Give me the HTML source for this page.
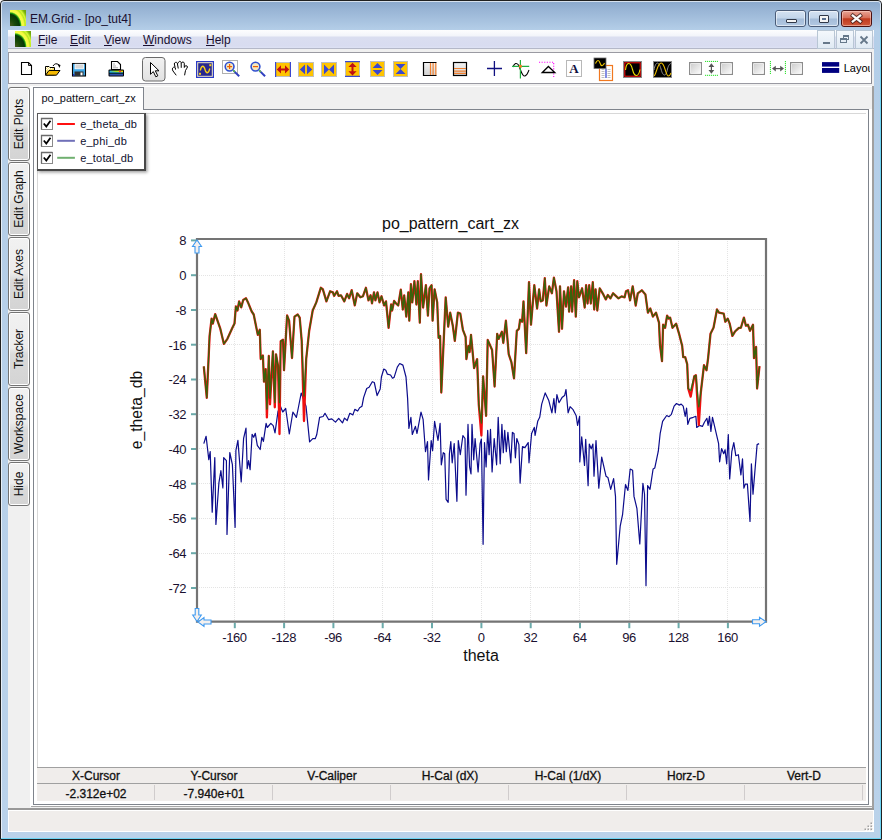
<!DOCTYPE html>
<html><head><meta charset="utf-8">
<style>
*{margin:0;padding:0;box-sizing:border-box}
html,body{width:882px;height:840px;overflow:hidden;background:#fff;font-family:"Liberation Sans",sans-serif}
.a{position:absolute}
#win{left:0;top:0;width:882px;height:840px;background:linear-gradient(#8aa8cc 0px,#9ab6d6 10px,#b4cee8 29px,#bad2ea 100%);border:1px solid #202020;border-radius:4px 4px 0 0}
#winhl{left:0;top:0;right:0;bottom:0;border:1px solid rgba(255,255,255,.65);border-radius:3px 3px 0 0}
.title{left:30px;top:11.5px;font-size:12px;color:#1a1030;white-space:nowrap}
.cb{top:10px;height:17px;border:1px solid #4a5c78;border-radius:3px;background:linear-gradient(#d4e2f2 0,#c2d5ea 48%,#a4bcd8 52%,#b2c8e2 100%)}
.cbin{position:absolute;left:0;top:0;right:0;bottom:0;border:1px solid rgba(255,255,255,.55);border-radius:2px}
.menu{left:8px;top:30px;width:866px;height:19px;background:linear-gradient(#fdfdfe 0,#f2f4fa 6px,#dadef0 7px,#d8dcf0 16px,#dde2f4 18px,#b4b8c8 18px,#b4b8c8 19px)}
.mi{font-size:12px;color:#1a1030;white-space:nowrap}
.mdib{top:30px;height:19px;border:1px solid #b8c6d4;background:linear-gradient(#f4f8fc,#e0eaf4)}
#client{left:8px;top:49px;width:866px;height:783px;background:#f0f0f0}
#tb{left:8px;top:52px;width:864px;height:32px;background:#fff;border:1px solid #9a9aa2;border-right-color:#8a8a92}
.stab{left:8px;width:22px;border:1px solid #747474;border-radius:3px;box-shadow:inset 0 0 0 1px #fff;background:linear-gradient(#f1f1f1 0,#ececec 48%,#dadada 58%,#d4d4d4 100%)}
.stab span{position:absolute;left:50%;top:50%;transform:translate(-50%,-50%) rotate(-90deg);white-space:nowrap;font-size:12px;color:#101010}
#panel{left:33px;top:109px;width:836px;height:696px;background:#fff;border:1px solid #7f848c}
#tab{left:33px;top:87px;width:111px;height:23px;background:#fff;border:1px solid #7f848c;border-bottom:none}
#tab span{position:absolute;left:7.5px;top:3.5px;font-size:11px;color:#101020;white-space:nowrap}
.th{top:769px;height:15px;font-size:12px;-webkit-text-stroke:0.3px #101010;text-align:center;color:#101010;line-height:15px;white-space:nowrap}
.tv{top:786px;height:16px;font-size:12px;-webkit-text-stroke:0.3px #101010;text-align:center;color:#101010;line-height:16px;white-space:nowrap}
svg text{font-family:"Liberation Sans",sans-serif}
.grid{stroke:#e4e4e4;stroke-width:1;stroke-dasharray:1,1}
.tick{stroke:#6aaaaa;stroke-width:2}
.tl{font-size:13px;letter-spacing:-0.4px;fill:#1a1030}
.ttl{font-size:16px;fill:#101010}
.leg{font-size:11px;letter-spacing:0.17px;fill:#101030}
</style></head><body>
<div class="a" id="win"><div class="a" id="winhl"></div></div>
<div class="a" style="left:10px;top:10px;width:16px;height:16px;background:radial-gradient(ellipse 19px 23px at 0% 100%,#4a5a20 0,#1a4a0a 25%,#063806 50%,#20a010 56%,#f0ff48 62%,#f8f840 72%,#b8e820 80%,#d8f838 86%,#88c010 95%,#70a810 100%)"></div>
<div class="a title">EM.Grid - [po_tut4]</div>
<div class="a cb" style="left:775px;width:31px"><div class="cbin"></div><div class="a" style="left:10px;top:8px;width:11px;height:4px;background:#f4f4f4;border:1px solid #303848;border-radius:1px"></div></div>
<div class="a cb" style="left:808px;width:31px"><div class="cbin"></div><div class="a" style="left:10px;top:4px;width:10px;height:8px;background:#f4f4f4;border:1px solid #303848;border-radius:1px"><div class="a" style="left:2px;top:2px;width:4px;height:2px;background:#5a7090"></div></div></div>
<div class="a cb" style="left:841px;width:31px;border-color:#4a1010;background:linear-gradient(#e8a496 0,#d8705a 45%,#c03a1e 52%,#d05a3c 100%)"><div class="cbin" style="border-color:rgba(255,220,210,.5)"></div>
<svg class="a" style="left:0;top:0" width="29" height="15"><path d="M10.8,4.6 L18.2,10.4 M18.2,4.6 L10.8,10.4" stroke="#3a1a18" stroke-width="4" stroke-linecap="square" stroke-opacity=".8"/><path d="M10.8,4.6 L18.2,10.4 M18.2,4.6 L10.8,10.4" stroke="#fafafa" stroke-width="2.3" stroke-linecap="square"/></svg></div>
<div class="a menu"></div>
<div class="a" style="left:15px;top:31px;width:16px;height:16px;background:radial-gradient(ellipse 19px 23px at 0% 100%,#4a5a20 0,#1a4a0a 25%,#063806 50%,#20a010 56%,#f0ff48 62%,#f8f840 72%,#b8e820 80%,#d8f838 86%,#88c010 95%,#70a810 100%)"></div>
<div class="a mi" style="left:38px;top:33px"><u>F</u>ile</div>
<div class="a mi" style="left:70px;top:33px"><u>E</u>dit</div>
<div class="a mi" style="left:104px;top:33px"><u>V</u>iew</div>
<div class="a mi" style="left:143px;top:33px"><u>W</u>indows</div>
<div class="a mi" style="left:206px;top:33px"><u>H</u>elp</div>
<div class="a mdib" style="left:817px;width:18px"><div class="a" style="left:5px;top:11px;width:7px;height:2px;background:#66788a"></div></div>
<div class="a mdib" style="left:836px;width:18px"><div class="a" style="left:6px;top:4px;width:6px;height:5px;border:1px solid #66788a;border-top-width:2px"></div><div class="a" style="left:3px;top:7px;width:7px;height:5px;background:#e6eef6;border:1px solid #66788a;border-top-width:2px"></div></div>
<div class="a mdib" style="left:855px;width:18px"><svg class="a" style="left:0;top:0" width="16" height="17"><path d="M4.5,5.5 L11.5,12.5 M11.5,5.5 L4.5,12.5" stroke="#66788a" stroke-width="1.8"/></svg></div>
<div class="a" id="client"></div>
<div class="a" style="left:8px;top:49px;width:866px;height:3px;background:#f0f0f0"></div>
<div class="a" id="tb"></div>
<svg class="a" style="left:0;top:0" width="882" height="90">
<path d="M21.5,62.5 H28.5 L31.5,65.5 V74.5 H21.5 Z" fill="#fff" stroke="#000" stroke-width="1.1"/>
<path d="M28.5,62.5 V65.5 H31.5" fill="none" stroke="#000" stroke-width="0.9"/>
<path d="M45.5,66.5 H49 L50,67.5 H54.5 V75 H45.5 Z" fill="#f8e070" stroke="#000" stroke-width="1"/>
<path d="M46,67 h1 v1 h-1z M48,67 h1 v1 h-1z M47,68 h1 v1 h-1z M49,68 h1 v1 h-1z M51,68 h1 v1 h-1z M46,69 h1 v1 h-1z M48,69 h1 v1 h-1z" fill="#fff"/>
<path d="M45.5,75.2 L49,70.5 H60 L56.5,75.2 Z" fill="#f4b800" stroke="#000" stroke-width="1"/>
<path d="M53,66 Q55.5,62 59,65" fill="none" stroke="#000" stroke-width="1"/>
<path d="M57.5,64 L60.5,65 L59.5,68 Z" fill="#000"/>
<rect x="72.5" y="63.5" width="13" height="12.5" fill="#40a8e8" stroke="#000" stroke-width="1.1"/>
<rect x="75" y="64.2" width="8.5" height="4.6" fill="#d8d8d8" stroke="#fff" stroke-width="0.8"/>
<rect x="74.5" y="71.5" width="9" height="4.2" fill="#303030"/>
<rect x="80.5" y="72.5" width="2" height="2.8" fill="#fff"/>
<rect x="73" y="74" width="1.5" height="1.6" fill="#2030c0"/>
<path d="M111.5,61.5 H117.5 L120.5,64.5 V69.5 H111.5 Z" fill="#fff" stroke="#000" stroke-width="1.1"/>
<path d="M113,64 h2 M113,66 h3 M113,67.8 h5" stroke="#888" stroke-width="0.7"/>
<rect x="108.5" y="69.5" width="15.5" height="7" rx="1" fill="#000"/>
<rect x="109.5" y="70.6" width="13.5" height="1.8" fill="url(#prg)"/>
<rect x="109.5" y="72.4" width="13.5" height="0.9" fill="#1aa0e0"/>
<rect x="109.5" y="74" width="13.5" height="1.6" fill="#3050b0"/>
<rect x="119" y="70.6" width="2" height="1.6" fill="#ff3030"/>
<rect x="142.5" y="57.5" width="22.5" height="23.5" rx="3" fill="url(#btng)" stroke="#6a6a6a" stroke-width="1"/>
<path d="M150.5,62.5 V74.3 L153.3,71.6 L155.8,76.8 L157.8,75.8 L155.3,70.8 L159,70.8 Z" fill="#fff" stroke="#000" stroke-width="1"/>
<path d="M176.25,75.3 L173,71 C172,69.5 172.2,68 173.5,67.3 C174.3,67 175,67.3 175.3,67.8 L175.5,69.6 M175.1,67.4 L174.3,64 C174.1,62.4 176.6,61.7 177.3,63 L178.25,68.5 M178.25,63.2 C178.4,61 180.7,60.8 181.2,62.6 L181.25,67.8 M181.4,63.2 C181.8,61.6 184,61.6 184.25,63.2 L184.3,67.8 M184.3,66.9 C185,65.4 187.4,65.3 187.5,67 L186.5,68.8 L185.5,70.5 L185,73 L184.6,75.3" fill="none" stroke="#000" stroke-width="1"/>
<rect x="196" y="61" width="18" height="17" fill="#2a3ac8"/>
<rect x="197.2" y="62.2" width="15.6" height="14.6" fill="#f0e8c0"/>
<rect x="198.2" y="63.2" width="13.6" height="12.6" fill="#282890"/>
<path d="M200.3,70.5 C201.5,65 203.8,65 205,69.5 C206.2,74 208.5,74 209.8,68.5" fill="none" stroke="#f8d018" stroke-width="1.3"/>
<rect x="209.3" y="64.2" width="2" height="2" fill="#f8d018"/><rect x="199" y="72.8" width="2" height="2" fill="#f8d018"/>
<rect x="222.5" y="60.5" width="15" height="13" fill="#fff" stroke="#b0b0b0" stroke-width="1"/>
<line x1="233.5" y1="70.6" x2="239.2" y2="76.3" stroke="#3040c0" stroke-width="2"/>
<line x1="233.2" y1="70.3" x2="234.8" y2="71.9" stroke="#60c040" stroke-width="1.5"/>
<circle cx="229.6" cy="66.6" r="4.4" fill="#f4e8c0" stroke="#3050d0" stroke-width="1.6"/>
<path d="M229.6,64.1 V69.1 M227.1,66.6 H232.1" stroke="#f06000" stroke-width="1.2"/>
<line x1="259.4" y1="70.6" x2="265.1" y2="76.3" stroke="#3040c0" stroke-width="2"/>
<line x1="259.1" y1="70.3" x2="260.7" y2="71.9" stroke="#60c040" stroke-width="1.5"/>
<circle cx="255.5" cy="66.6" r="4.4" fill="#f4e8c0" stroke="#3050d0" stroke-width="1.6"/>
<path d="M253,66.6 H258" stroke="#f06000" stroke-width="1.2"/>
<rect x="275.5" y="62.5" width="15" height="14" fill="#ffc400" stroke="#bfbfbf" stroke-width="1"/><path d="M275.6,62 V77 M290.4,62 V77" stroke="#3a48d0" stroke-width="1.2"/>
<path d="M276.8,69.4 L281,65.3 V68.4 H285 V65.3 L289.2,69.4 L285,73.5 V70.4 H281 V73.5 Z" fill="#c01010"/>
<rect x="298.5" y="62.5" width="15" height="14" fill="#ffc400" stroke="#bfbfbf" stroke-width="1"/>
<path d="M299.8,69.4 L305,64.6 V74.2 Z M312.3,69.4 L307,64.6 V74.2 Z" fill="#3a48d0"/>
<rect x="321.5" y="62.5" width="15" height="14" fill="#ffc400" stroke="#bfbfbf" stroke-width="1"/>
<path d="M324,64.5 L329,69.4 L324,74.3 Z M334,64.5 L329,69.4 L334,74.3 Z" fill="#3a48d0"/>
<rect x="345.5" y="61.5" width="14" height="15" fill="#ffc400" stroke="#bfbfbf" stroke-width="1"/><path d="M345,61.6 H360 M345,76.4 H360" stroke="#3a48d0" stroke-width="1.2"/>
<path d="M352.5,62.8 L356.6,67 H353.5 V71.2 H356.6 L352.5,75.4 L348.4,71.2 H351.5 V67 H348.4 Z" fill="#c01010"/>
<rect x="370.5" y="61.5" width="14" height="15" fill="#ffc400" stroke="#bfbfbf" stroke-width="1"/>
<path d="M372.6,68 L377.5,62.9 L382.5,68 Z M372.6,70 L377.5,75 L382.5,70 Z" fill="#3a48d0"/>
<rect x="393.5" y="61.5" width="14" height="15" fill="#ffc400" stroke="#bfbfbf" stroke-width="1"/>
<path d="M395.6,64 H405.5 L400.5,69.1 Z M395.6,74 H405.5 L400.5,69.1 Z" fill="#3a48d0"/>
<defs><linearGradient id="gg" x1="0" y1="0" x2="0" y2="1"><stop offset="0" stop-color="#f4f4f4"/><stop offset="1" stop-color="#d0d0d0"/></linearGradient><linearGradient id="btng" x1="0" y1="0" x2="0" y2="1"><stop offset="0" stop-color="#f2f2f2"/><stop offset="1" stop-color="#e2e2e2"/></linearGradient><linearGradient id="prg" x1="0" y1="0" x2="1" y2="0"><stop offset="0" stop-color="#20b0f0"/><stop offset=".5" stop-color="#a0e020"/><stop offset="1" stop-color="#f0e000"/></linearGradient><linearGradient id="cbg" x1="0" y1="0" x2="1" y2="1"><stop offset="0" stop-color="#c8c8c8"/><stop offset="1" stop-color="#ffffff"/></linearGradient></defs>
<rect x="423.5" y="62.5" width="13" height="13" fill="url(#gg)"/>
<path d="M436.5,62.5 H423.5 V75.5 H436.5" fill="none" stroke="#000" stroke-width="1.2"/>
<path d="M430.5,63 V75 M433.1,63 V75 M435.8,63 V75" stroke="#f08030" stroke-width="1.2"/>
<rect x="453.5" y="62.5" width="13" height="13" fill="url(#gg)" stroke="#000" stroke-width="1.2"/>
<path d="M454,68.5 H466 M454,71.1 H466 M454,73.4 H466" stroke="#f08030" stroke-width="1.2"/>
<path d="M487,68.5 H502 M494.4,61 V76" stroke="#101080" stroke-width="1.3"/>
<path d="M513,67 C514.5,63 516.5,62.5 518.5,65 C521,70 522,77 525,76 C527.5,75 528.5,71 529,70" fill="none" stroke="#000" stroke-width="1.1"/>
<path d="M512,66.3 H529.2 M520.4,60 V78.6" stroke="#20b040" stroke-width="1.2"/>
<rect x="519" y="64.9" width="2.8" height="2.8" fill="#f08020"/>
<path d="M539,62.2 H553.7 V77" fill="none" stroke="#ff00ff" stroke-width="1.1" stroke-dasharray="1.1,1.5"/>
<path d="M542.3,72.5 L548.4,66.5 L554.8,72.5 Z" fill="#fff" stroke="#000" stroke-width="1.3"/>
<rect x="566.5" y="60.5" width="15" height="16" fill="#fff" stroke="#b8b8b8" stroke-width="1"/>
<text x="574" y="73.3" text-anchor="middle" style="font-family:Liberation Serif,serif;font-weight:bold;font-size:13px" fill="#101040">A</text>
<rect x="599.5" y="65.5" width="13" height="15" fill="#fff" stroke="#f07820" stroke-width="1.2"/>
<path d="M601.5,69.5 h3 M601.5,71.5 h3 M601.5,73.5 h3 M601.5,75.5 h3 M601.5,77.5 h3 M607.5,69.5 h3 M607.5,71.5 h3 M607.5,73.5 h3 M607.5,75.5 h3 M607.5,77.5 h3" stroke="#b0b0b0" stroke-width="0.8"/>
<path d="M606,68.5 V78" stroke="#3040d0" stroke-width="1.2"/>
<rect x="594" y="58" width="12" height="10.5" fill="#000" stroke="#707070" stroke-width="0.8"/>
<path d="M595.5,63.5 C597,59.5 599,59.5 600,63 C601,66.5 603,66.5 604.5,63" fill="none" stroke="#f0c800" stroke-width="1.1"/>
<rect x="623.5" y="61.5" width="18" height="16" fill="#000" stroke="#8a8a8a" stroke-width="1"/>
<rect x="624.8" y="62.8" width="15.4" height="13.4" fill="none" stroke="#ff1010" stroke-width="1"/>
<path d="M625.5,70 C626.5,61.5 630.5,61.5 632.5,69.5 C634.5,77.5 638.5,77.5 640,69.5" fill="none" stroke="#f0e000" stroke-width="1.1"/>
<rect x="653.5" y="61.5" width="18" height="16" fill="#000" stroke="#8a8a8a" stroke-width="1"/>
<path d="M654,70 C655.5,61 659,61 661,69 C663,77 666,77 667.5,69 C668.5,65 670,63.5 671,63.5" fill="none" stroke="#909090" stroke-width="1"/>
<path d="M654.3,76 C657,72 657.5,63 661.2,63 C665,63 665.5,76 668.5,76 C670,76 670.5,74 671,73" fill="none" stroke="#f0c000" stroke-width="1.1"/>
<rect x="689.6" y="62.6" width="11.8" height="11.8" fill="url(#cbg)" stroke="#8c8c8c" stroke-width="1.2"/><rect x="690.7" y="63.7" width="9.6" height="9.6" fill="none" stroke="#fff" stroke-width="0.6"/>
<rect x="720.6" y="62.6" width="11.8" height="11.8" fill="url(#cbg)" stroke="#8c8c8c" stroke-width="1.2"/><rect x="721.7" y="63.7" width="9.6" height="9.6" fill="none" stroke="#fff" stroke-width="0.6"/>
<rect x="752.6" y="62.6" width="11.8" height="11.8" fill="url(#cbg)" stroke="#8c8c8c" stroke-width="1.2"/><rect x="753.7" y="63.7" width="9.6" height="9.6" fill="none" stroke="#fff" stroke-width="0.6"/>
<rect x="790.6" y="62.6" width="11.8" height="11.8" fill="url(#cbg)" stroke="#8c8c8c" stroke-width="1.2"/><rect x="791.7" y="63.7" width="9.6" height="9.6" fill="none" stroke="#fff" stroke-width="0.6"/>
<path d="M705,61.4 H718 M705,75.3 H718" stroke="#20e020" stroke-width="1" stroke-dasharray="1.2,0.8"/>
<path d="M708.5,67 L711.4,63.2 L714.3,67 Z M708.5,70 L711.4,73.8 L714.3,70 Z" fill="#555"/><path d="M711.4,66 V71" stroke="#555" stroke-width="1.2"/>
<path d="M770.4,61 V74 M785.4,61 V74" stroke="#20e020" stroke-width="1" stroke-dasharray="1.2,0.8"/>
<path d="M772,68.6 L775.8,65.7 V71.5 Z M784,68.6 L780.2,65.7 V71.5 Z" fill="#555"/><path d="M775,68.6 H781" stroke="#555" stroke-width="1.2"/>
<rect x="822" y="62.1" width="17.2" height="4.5" fill="#000080"/><rect x="822" y="68" width="17.2" height="4.9" fill="#000080"/>
</svg>
<div class="a" style="left:843.7px;top:60px;width:26.5px;height:16px;overflow:hidden;font-size:11px;line-height:16px;color:#000;white-space:nowrap">Layout</div>
<div class="a stab" style="top:87px;height:74px"><span>Edit Plots</span></div>
<div class="a stab" style="top:162px;height:74px"><span>Edit Graph</span></div>
<div class="a stab" style="top:237px;height:74px"><span>Edit Axes</span></div>
<div class="a stab" style="top:312px;height:74px"><span>Tracker</span></div>
<div class="a stab" style="top:387px;height:74px"><span>Workspace</span></div>
<div class="a stab" style="top:462px;height:44px"><span>Hide</span></div>
<div class="a" style="left:30px;top:86px;width:843px;height:721px;background:#fff"></div>
<div class="a" style="left:143px;top:87px;width:729px;height:22px;background:#f0f0f0"></div>
<div class="a" style="left:872px;top:86px;width:2px;height:724px;background:#a0a0a0"></div>
<div class="a" id="panel"></div>
<div class="a" id="tab"><span>po_pattern_cart_zx</span></div>
<div class="a" style="left:37px;top:113px;width:829px;height:655px;border-left:1px solid #d8d8d8;border-top:1px solid #d8d8d8"></div>
<!-- legend -->
<div class="a" style="left:37px;top:113px;width:109px;height:58px;background:#fff;border:1px solid #5a5a5a;border-right:2px solid #484848;border-bottom:2px solid #484848;box-shadow:1px 1px 3px 0.5px rgba(0,0,0,.38)"></div>
<svg class="a" style="left:0;top:0" width="882" height="840">
<defs><linearGradient id="lcb" x1="0" y1="0" x2="1" y2="1"><stop offset="0" stop-color="#d8d8d8"/><stop offset="1" stop-color="#fff"/></linearGradient></defs>
<g id="legend">
<rect x="41.5" y="118.5" width="11" height="11" fill="#fff" stroke="#8a8a8a" stroke-width="1"/><path d="M41.5,129.5 V118.5 H52.5" fill="none" stroke="#6a6a6a" stroke-width="1.3"/>
<path d="M43.8,123.5 L46.3,126.5 L50.5,120.8" fill="none" stroke="#000" stroke-width="1.8"/>
<rect x="41.5" y="135.5" width="11" height="11" fill="#fff" stroke="#8a8a8a" stroke-width="1"/><path d="M41.5,146.5 V135.5 H52.5" fill="none" stroke="#6a6a6a" stroke-width="1.3"/>
<path d="M43.8,140.5 L46.3,143.5 L50.5,137.8" fill="none" stroke="#000" stroke-width="1.8"/>
<rect x="41.5" y="152.5" width="11" height="11" fill="#fff" stroke="#8a8a8a" stroke-width="1"/><path d="M41.5,163.5 V152.5 H52.5" fill="none" stroke="#6a6a6a" stroke-width="1.3"/>
<path d="M43.8,157.5 L46.3,160.5 L50.5,154.8" fill="none" stroke="#000" stroke-width="1.8"/>
<line x1="57.2" y1="124" x2="74.9" y2="124" stroke="#ff1010" stroke-width="2"/>
<line x1="57.2" y1="140.8" x2="74.9" y2="140.8" stroke="#7070b8" stroke-width="2"/>
<line x1="57.2" y1="157.8" x2="74.9" y2="157.8" stroke="#70b070" stroke-width="2"/>
<text x="80.3" y="128.2" class="leg">e_theta_db</text>
<text x="80.3" y="145" class="leg">e_phi_db</text>
<text x="80.3" y="162" class="leg">e_total_db</text>
</g>
<line x1="234.5" y1="241" x2="234.5" y2="620" class="grid"/>
<line x1="284.5" y1="241" x2="284.5" y2="620" class="grid"/>
<line x1="333.5" y1="241" x2="333.5" y2="620" class="grid"/>
<line x1="382.5" y1="241" x2="382.5" y2="620" class="grid"/>
<line x1="432.5" y1="241" x2="432.5" y2="620" class="grid"/>
<line x1="481.5" y1="241" x2="481.5" y2="620" class="grid"/>
<line x1="530.5" y1="241" x2="530.5" y2="620" class="grid"/>
<line x1="579.5" y1="241" x2="579.5" y2="620" class="grid"/>
<line x1="629.5" y1="241" x2="629.5" y2="620" class="grid"/>
<line x1="678.5" y1="241" x2="678.5" y2="620" class="grid"/>
<line x1="727.5" y1="241" x2="727.5" y2="620" class="grid"/>
<line x1="199" y1="587.5" x2="765" y2="587.5" class="grid"/>
<line x1="199" y1="553.5" x2="765" y2="553.5" class="grid"/>
<line x1="199" y1="518.5" x2="765" y2="518.5" class="grid"/>
<line x1="199" y1="483.5" x2="765" y2="483.5" class="grid"/>
<line x1="199" y1="448.5" x2="765" y2="448.5" class="grid"/>
<line x1="199" y1="414.5" x2="765" y2="414.5" class="grid"/>
<line x1="199" y1="379.5" x2="765" y2="379.5" class="grid"/>
<line x1="199" y1="344.5" x2="765" y2="344.5" class="grid"/>
<line x1="199" y1="309.5" x2="765" y2="309.5" class="grid"/>
<line x1="199" y1="275.5" x2="765" y2="275.5" class="grid"/>
<line x1="234.8" y1="622.7" x2="234.8" y2="628.2" class="tick"/>
<text x="234.5" y="641.6" class="tl" text-anchor="middle">-160</text>
<line x1="284.1" y1="622.7" x2="284.1" y2="628.2" class="tick"/>
<text x="283.8" y="641.6" class="tl" text-anchor="middle">-128</text>
<line x1="333.4" y1="622.7" x2="333.4" y2="628.2" class="tick"/>
<text x="333.1" y="641.6" class="tl" text-anchor="middle">-96</text>
<line x1="382.7" y1="622.7" x2="382.7" y2="628.2" class="tick"/>
<text x="382.4" y="641.6" class="tl" text-anchor="middle">-64</text>
<line x1="432.0" y1="622.7" x2="432.0" y2="628.2" class="tick"/>
<text x="431.7" y="641.6" class="tl" text-anchor="middle">-32</text>
<line x1="481.4" y1="622.7" x2="481.4" y2="628.2" class="tick"/>
<text x="481.1" y="641.6" class="tl" text-anchor="middle">0</text>
<line x1="530.7" y1="622.7" x2="530.7" y2="628.2" class="tick"/>
<text x="530.4" y="641.6" class="tl" text-anchor="middle">32</text>
<line x1="580.0" y1="622.7" x2="580.0" y2="628.2" class="tick"/>
<text x="579.7" y="641.6" class="tl" text-anchor="middle">64</text>
<line x1="629.3" y1="622.7" x2="629.3" y2="628.2" class="tick"/>
<text x="629.0" y="641.6" class="tl" text-anchor="middle">96</text>
<line x1="678.6" y1="622.7" x2="678.6" y2="628.2" class="tick"/>
<text x="678.3" y="641.6" class="tl" text-anchor="middle">128</text>
<line x1="727.9" y1="622.7" x2="727.9" y2="628.2" class="tick"/>
<text x="727.6" y="641.6" class="tl" text-anchor="middle">160</text>
<line x1="191" y1="588.0" x2="196" y2="588.0" class="tick"/>
<text x="186.2" y="592.8" class="tl" text-anchor="end">-72</text>
<line x1="191" y1="553.2" x2="196" y2="553.2" class="tick"/>
<text x="186.2" y="558.0" class="tl" text-anchor="end">-64</text>
<line x1="191" y1="518.5" x2="196" y2="518.5" class="tick"/>
<text x="186.2" y="523.3" class="tl" text-anchor="end">-56</text>
<line x1="191" y1="483.7" x2="196" y2="483.7" class="tick"/>
<text x="186.2" y="488.5" class="tl" text-anchor="end">-48</text>
<line x1="191" y1="449.0" x2="196" y2="449.0" class="tick"/>
<text x="186.2" y="453.8" class="tl" text-anchor="end">-40</text>
<line x1="191" y1="414.2" x2="196" y2="414.2" class="tick"/>
<text x="186.2" y="419.0" class="tl" text-anchor="end">-32</text>
<line x1="191" y1="379.5" x2="196" y2="379.5" class="tick"/>
<text x="186.2" y="384.3" class="tl" text-anchor="end">-24</text>
<line x1="191" y1="344.7" x2="196" y2="344.7" class="tick"/>
<text x="186.2" y="349.5" class="tl" text-anchor="end">-16</text>
<line x1="191" y1="310.0" x2="196" y2="310.0" class="tick"/>
<text x="186.2" y="314.8" class="tl" text-anchor="end">-8</text>
<line x1="191" y1="275.2" x2="196" y2="275.2" class="tick"/>
<text x="186.2" y="280.0" class="tl" text-anchor="end">0</text>
<line x1="191" y1="240.4" x2="196" y2="240.4" class="tick"/>
<text x="186.2" y="245.2" class="tl" text-anchor="end">8</text>
<polyline points="203.8,443.6 206.1,436.3 208.8,459.6 210.2,451.5 212.2,512.2 214.8,457.6 215.9,524.4 218.9,482.9 220.9,470.7 222.9,487.9 223.7,457.6 226.4,460.6 227,534.5 229.8,452.5 232.4,464.7 235.1,527.4 235.9,450.5 237.9,440.4 241.2,481.9 243.6,438.3 246,428.2 247.2,468.7 248.6,460.6 250.1,469.7 252.1,434.3 253.7,437.3 255.3,433.3 257.3,445.4 260.2,449.5 261.8,437.3 263.4,441.4 266.1,423.3 267.3,427.5 270.8,423.3 273.2,425.7 275,432.9 278,411.4 280.4,406.1 282.7,412 285.7,408.5 289.3,434 292.9,412 296.4,417.4 298.2,408.5 301.2,393 306,406.1 309.6,441.9 312.8,438.7 315.2,438.7 316.7,434.8 319.6,417.3 323.1,416.5 325,413.3 328.7,419.7 331.8,418.9 335.5,422.1 338.7,418.4 342.5,422.9 344.5,418.1 347.2,420.5 349.8,413.3 352.9,414.9 354.8,409.4 357.7,411 359.6,407.8 362,406.2 363.6,397.6 366.7,388.5 369.1,387.3 372.3,381.7 374.3,382.5 377.1,395.6 380.2,388.9 381.4,377 383.8,369 385.8,370.2 387.4,374.2 390.6,375 392.5,378.2 394.1,377.4 397.3,367.1 399.7,363.5 402.9,365.1 406,377 407.6,398.4 408.9,428.4 410.9,417.3 412.3,434.5 415.4,426.4 417,433.5 421,412.2 423.1,419.3 425.5,451.7 427.5,441.6 428.5,480 431.2,440.5 432.6,450.7 434.6,421.3 438,440.5 440.1,423.3 441.3,464.8 443.3,452.7 444.7,453.7 446.1,499.3 448.2,502.3 449.4,453.7 450.8,441.6 452.2,462.8 454.2,443.6 456.9,501.3 458.3,440.5 460.3,454.7 462.9,435.5 465,438.5 466,495.2 468,424.4 469.6,466.9 471,473.9 472,424.4 473.7,459.8 475.1,438.5 478.1,471.9 480.1,443.6 481.4,439 483.1,544.3 484.5,442.6 486.1,466.9 487.7,430.4 489.1,454.7 490.5,429.4 492.1,471.9 494.2,438.5 496.6,464.8 498.2,417.3 500.2,463.8 501.9,424.4 503.3,452.7 504.7,430.4 506.3,451.7 507.9,432.4 510.8,462.8 512.4,432.4 514,433.5 515.4,457.8 516.8,438.5 518.9,444.6 520.1,483.1 522.5,446.6 524.9,447.6 528.2,442.6 529,462.8 531.6,433.5 534.3,427.4 535.1,435.5 537.7,421.3 539.7,417.3 541.7,404.1 545.2,392.9 548.8,400.6 551.9,412.8 553.9,398.6 555.3,412.8 556.9,394.6 559,402.7 562,397.6 564.6,395.6 566,389.5 568.1,412.8 570.1,406.7 573.1,409.7 576.2,415.8 577.6,425.4 579.6,416.3 579.8,461.9 581.7,436.9 584.5,465.5 585.7,439.3 588.1,485.7 589.3,444 591.2,448.8 592.9,444 594,476.2 596,440.5 598.8,488.1 601.7,457.1 606,476.2 607.9,477.4 610.7,489.3 613.6,478.6 615.5,496.4 616.7,564.3 620.2,526.2 622.6,514.3 625.5,484.5 627.9,490.5 630.2,469 632.6,470.2 634,496.4 636.9,508.3 639.8,544 642.9,483.3 644.5,494 646,585.7 647.6,485.7 650,489.3 653.1,469 654.8,467.9 658.3,451.2 660.2,433.3 662.6,421.4 666.7,415.5 669,416.7 671.4,414.3 674.1,406.1 676.5,403.5 679.1,405.1 681.2,404.1 683.2,406.1 685.2,416.3 686.6,408.2 687.8,424.4 689.9,418.3 693.3,417.3 695.9,416.3 696.7,427.4 699.4,425.4 702.4,426.4 704.4,422.3 706.9,418.3 708.1,425.4 709.5,416.3 710.9,431.4 712.5,417.3 718.6,443.6 719.6,461.8 721.6,448.6 723.7,453.7 725.1,449.7 726.7,463.8 728.3,434.5 729.7,479 731.8,451.7 733.8,442.6 735.8,455.7 738.4,454.7 740.9,475 742.5,458.8 743.9,488.1 745.3,484.1 747.4,484.1 750,521.5 751.4,463.8 753,494.2 757.1,444.6 759.1,443.6" fill="none" stroke="#0c0c8c" stroke-width="1.2" stroke-linejoin="round"/>
<polyline points="203.8,366.4 206.8,397.8 209.6,335.8 211.6,318.6 212.8,323.6 215.2,314.1 220.3,328.7 223.9,343.9 227.4,338.8 232.4,327.7 234.5,323.6 235.9,306.4 237.5,310.5 239.1,301.4 241.2,307.4 243.2,300 246,298.3 248,302.4 251.7,311.5 253.7,314.5 257.8,334.8 259.8,329.7 260.7,359 262.9,355.5 264,381.7 265.7,369.2 266.9,417.4 268.8,356 270,404.3 272.9,351.3 274.8,407.3 276,354.3 278,365.6 279.5,434 280.7,341.2 283,339.8 284,370.2 287.1,315.5 289.1,320.6 292,358 294.5,316.6 297.7,314.5 299.7,317.6 301.7,340.9 304,421 306.2,359 309.2,330.7 312.7,310.5 316.3,302.4 320.8,287.8 322.8,289.2 326.4,301.4 330.1,291.3 332.9,292.3 334.1,295.9 337,291.3 338.6,295.9 341,295.3 344.3,301.4 347.1,293.9 349.1,298.3 351.7,290.2 354.8,305.4 357.2,293.3 360.4,297.3 362.9,296.3 365.9,287.8 368.5,300.4 370.6,295.3 372,303.4 374,292.3 375.4,300.4 377.5,292.3 379.5,302.4 381.5,296.3 384.1,305.4 386,301.4 388.6,327.8 391.1,304.5 392.1,310.5 394.1,301 396.1,303.5 398.2,305.5 400.8,289.7 402.8,309.5 404.2,295.4 406.3,316.6 408.3,292.3 409.3,320.7 410.9,284.2 412.3,302.4 414.4,281.2 416.4,304.5 417.8,281.2 419.8,322.7 421,274.1 423.1,307.5 425.9,285.2 427.9,315.6 429.5,288.3 431.6,285.2 432.6,320.7 434.6,289.3 437.2,302.4 438.6,337.9 440.1,335.9 441.3,392.5 445.7,297.4 448.2,326.7 450.2,312.6 452.8,325.7 454.8,340.9 457.9,312.6 460.3,313.6 462.9,329.8 465.6,336.9 466.4,359.1 468.4,346 469.6,352 471,334.8 474.1,368.2 477.1,359.1 478.8,405 481.4,435.5 483.1,376.3 486.1,415.8 487.7,339.9 492.1,350 494.6,386.5 497.2,333.8 498.6,338.9 501.9,331.8 503.3,342.9 505.9,320.7 508.7,354.1 511.4,362.2 514,378.4 516.8,330.8 518.9,328.8 520.1,319.7 522.1,321.7 523.5,301.4 526.2,353.1 529,282.2 531,324.7 534.3,285.2 537.1,308.5 539.1,289.3 540.7,301.4 542.8,300.4 544.8,278.2 546.4,305.5 549.2,286.3 551.9,293.3 553.9,277.6 556.5,291.3 559,331.8 560,286.3 562,328.8 564,291.3 566,306.5 568.1,287.3 569.1,311.6 571.1,286.3 572.1,311.6 574.1,280.2 575.8,316.6 577.3,281.2 579,297.4 582.1,288.3 584.7,307.5 586.1,285.2 587.6,303.5 589.2,285.2 590.8,303.5 592.8,282.2 594.2,309.5 595.6,289.3 597.3,310.5 599.7,288.3 603.3,294.4 605.8,299.4 607.8,295 610.4,298.4 613.1,293.3 618.5,298.4 621.6,296.4 624.6,297.4 626,291.3 628,290.3 630.1,300.4 632.7,286.3 635.7,305.5 637.8,293.3 641.8,290.3 645.4,294.4 647.9,312.6 650.3,308.5 652.9,316.6 656,312.6 659,322.7 660,345 662,361.2 663.1,324.7 665.1,327.8 667.1,315.6 668.5,318.6 670.1,317.6 672.5,327.8 676.1,323.7 679.1,333.8 682.2,346 683.2,357.1 685.2,357.1 687.2,364.2 688.2,388.5 690.7,396.6 694.3,376.3 695.9,375.3 698.8,424.9 700.8,392.5 704,365.2 706.5,370.3 708.1,358.1 710.5,333.8 713.5,327.8 717,309.5 719,312.6 723.7,313.6 725.3,321.7 727.7,318.6 729.7,323.7 732.4,335.9 734.8,331.8 736.8,329.8 738.9,327.8 740.9,327.8 743.9,317.6 745.9,325.7 747.9,324.7 750,330.8 753,324.7 754,358.1 756.1,347 757.1,388.5 759.5,366.2" fill="none" stroke="#f01010" stroke-width="2.3" stroke-linejoin="round"/>
<polyline points="203.8,366.4 206.8,397.8 209.6,335.8 211.6,318.6 212.8,323.6 215.2,314.1 220.3,328.7 223.9,343.9 227.4,338.8 232.4,327.7 234.5,323.6 235.9,306.4 237.5,310.5 239.1,301.4 241.2,307.4 243.2,300 246,298.3 248,302.4 251.7,311.5 253.7,314.5 257.8,334.8 259.8,329.7 260.7,359 262.9,355.5 264,381.7 265.7,369.2 266.9,409 268.8,356 270,398.3 272.9,351.3 274.8,402.5 276,354.3 278,365.6 279.5,402.5 280.7,341.2 283,339.8 284,370.2 287.1,315.5 289.1,320.6 292,358 294.5,316.6 297.7,314.5 299.7,317.6 301.7,340.9 304,396 306.2,359 309.2,330.7 312.7,310.5 316.3,302.4 320.8,287.8 322.8,289.2 326.4,301.4 330.1,291.3 332.9,292.3 334.1,295.9 337,291.3 338.6,295.9 341,295.3 344.3,301.4 347.1,293.9 349.1,298.3 351.7,290.2 354.8,305.4 357.2,293.3 360.4,297.3 362.9,296.3 365.9,287.8 368.5,300.4 370.6,295.3 372,303.4 374,292.3 375.4,300.4 377.5,292.3 379.5,302.4 381.5,296.3 384.1,305.4 386,301.4 388.6,327.8 391.1,304.5 392.1,310.5 394.1,301 396.1,303.5 398.2,305.5 400.8,289.7 402.8,309.5 404.2,295.4 406.3,316.6 408.3,292.3 409.3,320.7 410.9,284.2 412.3,302.4 414.4,281.2 416.4,304.5 417.8,281.2 419.8,322.7 421,274.1 423.1,307.5 425.9,285.2 427.9,315.6 429.5,288.3 431.6,285.2 432.6,320.7 434.6,289.3 437.2,302.4 438.6,337.9 440.1,335.9 441.3,392.5 445.7,297.4 448.2,326.7 450.2,312.6 452.8,325.7 454.8,340.9 457.9,312.6 460.3,313.6 462.9,329.8 465.6,336.9 466.4,359.1 468.4,346 469.6,352 471,334.8 474.1,368.2 477.1,359.1 478.8,405 481.4,423 483.1,376.3 486.1,415.8 487.7,339.9 492.1,350 494.6,386.5 497.2,333.8 498.6,338.9 501.9,331.8 503.3,342.9 505.9,320.7 508.7,354.1 511.4,362.2 514,378.4 516.8,330.8 518.9,328.8 520.1,319.7 522.1,321.7 523.5,301.4 526.2,353.1 529,282.2 531,324.7 534.3,285.2 537.1,308.5 539.1,289.3 540.7,301.4 542.8,300.4 544.8,278.2 546.4,305.5 549.2,286.3 551.9,293.3 553.9,277.6 556.5,291.3 559,331.8 560,286.3 562,328.8 564,291.3 566,306.5 568.1,287.3 569.1,311.6 571.1,286.3 572.1,311.6 574.1,280.2 575.8,316.6 577.3,281.2 579,297.4 582.1,288.3 584.7,307.5 586.1,285.2 587.6,303.5 589.2,285.2 590.8,303.5 592.8,282.2 594.2,309.5 595.6,289.3 597.3,310.5 599.7,288.3 603.3,294.4 605.8,299.4 607.8,295 610.4,298.4 613.1,293.3 618.5,298.4 621.6,296.4 624.6,297.4 626,291.3 628,290.3 630.1,300.4 632.7,286.3 635.7,305.5 637.8,293.3 641.8,290.3 645.4,294.4 647.9,312.6 650.3,308.5 652.9,316.6 656,312.6 659,322.7 660,345 662,361.2 663.1,324.7 665.1,327.8 667.1,315.6 668.5,318.6 670.1,317.6 672.5,327.8 676.1,323.7 679.1,333.8 682.2,346 683.2,357.1 685.2,357.1 687.2,364.2 688.2,388.5 690.7,390.5 694.3,376.3 695.9,375.3 698.8,406.7 700.8,392.5 704,365.2 706.5,370.3 708.1,358.1 710.5,333.8 713.5,327.8 717,309.5 719,312.6 723.7,313.6 725.3,321.7 727.7,318.6 729.7,323.7 732.4,335.9 734.8,331.8 736.8,329.8 738.9,327.8 740.9,327.8 743.9,317.6 745.9,325.7 747.9,324.7 750,330.8 753,324.7 754,358.1 756.1,347 757.1,388.5 759.5,366.2" fill="none" stroke="#0a780a" stroke-width="1.4" stroke-opacity="0.8" stroke-linejoin="round"/>
<path d="M197,239 H766 V621.7 H197 Z" fill="none" stroke="#747474" stroke-width="2.2"/>
<path d="M197,240 L192.5,246.5 L195,246.5 L195,253 L199,253 L199,246.5 L201.5,246.5 Z" fill="#f4f0ee" stroke="#3f9af0" stroke-width="1.1"/>
<path d="M197,621.5 L192.7,615 L195.2,615 L195.2,608.5 L198.8,608.5 L198.8,615 L201.3,615 Z" fill="#f4f0ee" stroke="#3f9af0" stroke-width="1.1"/>
<path d="M198,622 L204,617.5 L204,620 L211,620 L211,624 L204,624 L204,626.5 Z" fill="#f4f0ee" stroke="#3f9af0" stroke-width="1.1"/>
<path d="M766,621.7 L759.5,617.3 L759.5,619.7 L752.5,619.7 L752.5,623.7 L759.5,623.7 L759.5,626.1 Z" fill="#f4f0ee" stroke="#3f9af0" stroke-width="1.1"/>
<text x="450.5" y="229" class="ttl" text-anchor="middle">po_pattern_cart_zx</text>
<text x="481" y="661" class="ttl" text-anchor="middle">theta</text>
<text transform="translate(142.3,410) rotate(-90)" class="ttl" text-anchor="middle" textLength="78.6" lengthAdjust="spacingAndGlyphs">e_theta_db</text>
</svg>
<!-- table -->
<div class="a" style="left:37px;top:767px;width:829px;height:1px;background:#a0a0a0"></div>
<div class="a" style="left:37px;top:768px;width:829px;height:15px;background:#f0edeb"></div>
<div class="a" style="left:37px;top:783px;width:829px;height:1px;background:#a0a0a0"></div>
<div class="a" style="left:37px;top:784px;width:829px;height:17px;background:#f0edeb"></div>
<div class="a th" style="left:37px;width:118px">X-Cursor</div>
<div class="a th" style="left:155px;width:118px">Y-Cursor</div>
<div class="a th" style="left:273px;width:118px">V-Caliper</div>
<div class="a th" style="left:391px;width:118px">H-Cal (dX)</div>
<div class="a th" style="left:509px;width:118px">H-Cal (1/dX)</div>
<div class="a th" style="left:627px;width:118px">Horz-D</div>
<div class="a th" style="left:745px;width:118px">Vert-D</div>
<div class="a tv" style="left:37px;width:118px">-2.312e+02</div>
<div class="a tv" style="left:155px;width:118px">-7.940e+01</div>
<div class="a" style="left:154px;top:785px;width:1px;height:15px;background:#d0cccc"></div>
<div class="a" style="left:272px;top:785px;width:1px;height:15px;background:#d0cccc"></div>
<div class="a" style="left:390px;top:785px;width:1px;height:15px;background:#d0cccc"></div>
<div class="a" style="left:508px;top:785px;width:1px;height:15px;background:#d0cccc"></div>
<div class="a" style="left:626px;top:785px;width:1px;height:15px;background:#d0cccc"></div>
<div class="a" style="left:744px;top:785px;width:1px;height:15px;background:#d0cccc"></div>
<div class="a" style="left:862px;top:785px;width:1px;height:15px;background:#d0cccc"></div>
<!-- status bar -->
<div class="a" style="left:31px;top:806px;width:842px;height:1px;background:#a8a8a8"></div>
<div class="a" style="left:8px;top:808px;width:866px;height:2px;background:#989898"></div>
<div class="a" style="left:8px;top:810px;width:866px;height:22px;background:#fff"></div>
<div class="a" style="left:9px;top:811px;width:864px;height:20px;background:#f0edeb"></div>
<div class="a" style="left:1px;top:838px;width:880px;height:1px;background:#6cd4f4"></div>
<div class="a" style="left:880px;top:20px;width:1px;height:819px;background:#6cd4f4"></div>
<svg class="a" style="left:0;top:0" width="882" height="840"><g fill="#fff"><rect x="871.5" y="823.5" width="1.5" height="1.5"/><rect x="868.5" y="826.5" width="1.5" height="1.5"/><rect x="871.5" y="826.5" width="1.5" height="1.5"/><rect x="865.5" y="829.5" width="1.5" height="1.5"/><rect x="868.5" y="829.5" width="1.5" height="1.5"/><rect x="871.5" y="829.5" width="1.5" height="1.5"/></g><g fill="#a0a0a0"><rect x="870.5" y="822.5" width="1.5" height="1.5"/><rect x="867.5" y="825.5" width="1.5" height="1.5"/><rect x="870.5" y="825.5" width="1.5" height="1.5"/><rect x="864.5" y="828.5" width="1.5" height="1.5"/><rect x="867.5" y="828.5" width="1.5" height="1.5"/><rect x="870.5" y="828.5" width="1.5" height="1.5"/></g></svg>
</body></html>
